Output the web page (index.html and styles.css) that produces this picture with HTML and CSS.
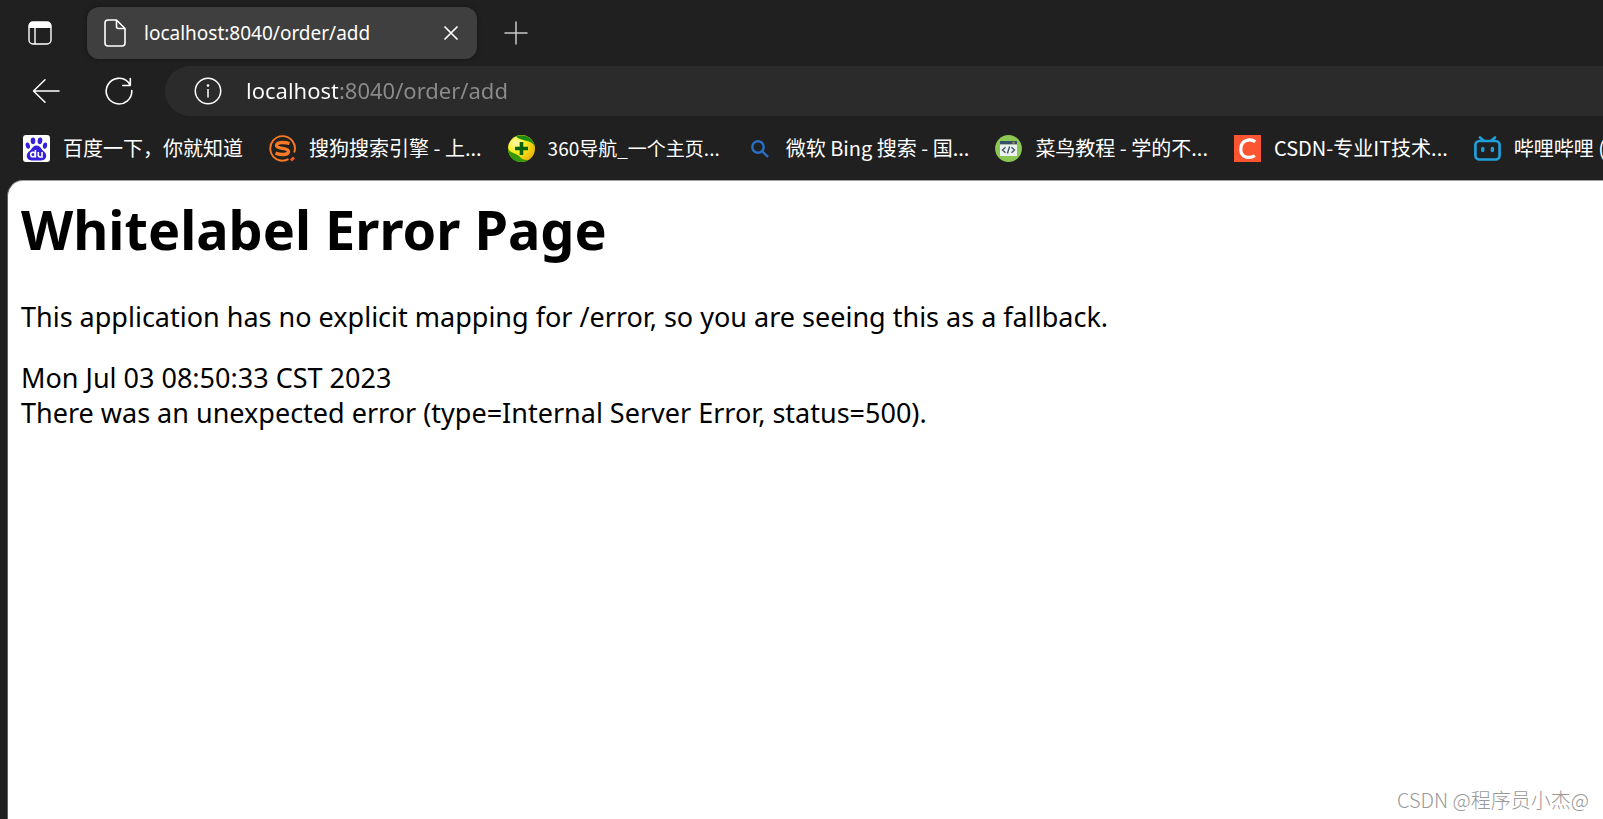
FILE: index.html
```
<!DOCTYPE html>
<html lang="zh-CN">
<head>
<meta charset="utf-8">
<meta name="viewport" content="width=device-width, initial-scale=1">
<title>localhost:8040/order/add</title>
<link rel="stylesheet" href="styles.css">
</head>
<body>
<div class="browser">
  <header class="chrome">
    <div class="tab-strip">
      <button class="icon-button tab-actions" type="button" aria-label="Tab actions">
        <svg width="24" height="24" viewBox="0 0 24 24" fill="none" stroke="#fff" stroke-width="1.4">
          <rect x="1" y="1" width="22" height="22" rx="4"/>
          <path d="M1 7V5a4 4 0 0 1 4-4h14a4 4 0 0 1 4 4v2z" fill="#fff" stroke="none"/>
          <path d="M7 7v16"/>
        </svg>
      </button>
      <div class="tab">
        <svg class="tab-icon" width="22" height="28" viewBox="0 0 22 28" fill="none" stroke="#fff" stroke-width="1.6" stroke-linejoin="round">
          <path d="M4 1h8.500L21 9.500V24a3 3 0 0 1-3 3H4a3 3 0 0 1-3-3V4a3 3 0 0 1 3-3z"/>
          <path d="M12.500 1v6.500a2 2 0 0 0 2 2H21"/>
        </svg>
        <span class="tab-title">localhost:8040/order/add</span>
        <button class="icon-button" type="button" aria-label="Close tab">
          <svg width="14" height="14" viewBox="0 0 14 14" stroke="#fff" stroke-width="1.7" stroke-linecap="round"><path d="M1 1l12 12M13 1L1 13"/></svg>
        </button>
      </div>
      <button class="icon-button" type="button" aria-label="New tab">
        <svg width="24" height="24" viewBox="0 0 24 24" stroke="#c8c8c8" stroke-width="1.5"><path d="M12 .5v23M.5 12h23"/></svg>
      </button>
    </div>

    <div class="toolbar">
      <button class="icon-button" type="button" aria-label="Back">
        <svg width="28" height="26" viewBox="0 0 28 26" fill="none" stroke="#fff" stroke-width="1.5" stroke-linecap="round" stroke-linejoin="round"><path d="M27 13H1.500M13 1.800L1.500 13 13 24.200"/></svg>
      </button>
      <button class="icon-button" type="button" aria-label="Refresh">
        <svg width="28" height="28" viewBox="0 0 28 28" fill="none" stroke="#fff" stroke-width="1.6" stroke-linecap="round" stroke-linejoin="round"><path d="M26.800 13.500A12.800 12.800 0 1 1 23.500 5.500L25.300 8.500M25.300 1.500v7h-7.500"/></svg>
      </button>
      <div class="address-bar">
        <svg width="28" height="28" viewBox="0 0 28 28" fill="none" stroke="#fff" stroke-width="1.5"><circle cx="14" cy="14" r="12.700"/><path d="M14 12v8.500"/><circle cx="14" cy="8.500" r="1.300" fill="#fff" stroke="none"/></svg>
        <input class="address" type="text" aria-label="Address" value="localhost:8040/order/add" spellcheck="false">
      </div>
    </div>

    <nav class="bookmarks" aria-label="Bookmarks">
      <a class="bookmark" href="#">
        <svg width="27" height="27" viewBox="0 0 27 27">
          <rect width="27" height="27" rx="3" fill="#fff"/>
          <g fill="#3420dc">
            <ellipse cx="10" cy="5.800" rx="2.300" ry="3.400"/><ellipse cx="17" cy="5.800" rx="2.300" ry="3.400" transform="rotate(8 17 5.800)"/>
            <ellipse cx="4.800" cy="10.600" rx="2.100" ry="3.200" transform="rotate(-12 4.800 10.600)"/><ellipse cx="22" cy="10.600" rx="2.100" ry="3.200" transform="rotate(8 22 10.600)"/>
            <path d="M13.500 10.500c2.800 0 4 2 5.500 4 1.600 2 4.200 3.400 4.200 6.300 0 3.300-2.400 4.700-5.200 4.600H9c-2.800.1-5.200-1.300-5.200-4.600 0-2.900 2.600-4.300 4.200-6.300 1.500-2 2.700-4 5.500-4z"/>
          </g>
          <g fill="none" stroke="#fff" stroke-width="1.600"><circle cx="10" cy="19.500" r="2.300"/><path d="M12.400 15v7.500M15.300 17v3.500a1.800 1.800 0 0 0 1.800 1.500h1.900v-5"/></g>
        </svg>
        <span>百度一下，你就知道</span>
      </a>
      <a class="bookmark" href="#">
        <svg width="27" height="27" viewBox="0 0 27 27" fill="none" stroke="#f87a25">
          <path d="M19.500 24.200A12.300 12.300 0 1 1 25.200 17.500" stroke-width="1.900"/>
          <path d="M20.500 8.500C14 6.500 7.500 7.500 7.500 10.500c0 4 12 1.800 12 6 0 3.500-7 3.800-13 1.600" stroke-width="3.400"/>
          <path d="M22 25.500l3-3" stroke="#f65a16" stroke-width="2.800"/>
        </svg>
        <span>搜狗搜索引擎 - 上...</span>
      </a>
      <a class="bookmark bookmark-compact" href="#">
        <svg width="27" height="27" viewBox="0 0 27 27">
          <defs><radialGradient id="ball" cx=".3" cy=".3" r=".75"><stop offset="0" stop-color="#fffcb0"/><stop offset=".45" stop-color="#f8ee20"/><stop offset="1" stop-color="#e9b70b"/></radialGradient></defs>
          <circle cx="13.500" cy="13.500" r="13.500" fill="url(#ball)"/>
          <path d="M8 1.500C15-2 25 2 26.800 11 22 4 14 7 8 1.500z" fill="#218c0c"/>
          <path d="M0 13C2 19 8 17 13 23c2 2 5 2 7 2.300C12 29.500 0 26 0 13z" fill="#35980b"/>
          <path d="M13.500 7v13M7 13.500h13" stroke="#08610c" stroke-width="3.600"/>
        </svg>
        <span>360导航_一个主页...</span>
      </a>
      <a class="bookmark" href="#">
        <svg width="27" height="27" viewBox="0 0 27 27" fill="none" stroke="#2870c5" stroke-width="2.400"><circle cx="12" cy="12" r="5.700"/><path d="M16 16l6 6"/></svg>
        <span>微软 Bing 搜索 - 国...</span>
      </a>
      <a class="bookmark" href="#">
        <svg width="27" height="27" viewBox="0 0 27 27">
          <circle cx="13.500" cy="13.500" r="13.400" fill="#8cc653"/>
          <path d="M5 6h17v3.500H5z" fill="#34516a"/><path d="M17.500 7h2v1.500h-2z" fill="#e29832"/><path d="M5 9.500h17V21H5z" fill="#ecf0f1"/>
          <path d="M10.500 12.200L7.500 15l3 2.800M16.500 12.200l3 2.800-3 2.800M14.600 11.500l-2.200 7" fill="none" stroke="#425b6c" stroke-width="1.400"/>
        </svg>
        <span>菜鸟教程 - 学的不...</span>
      </a>
      <a class="bookmark" href="#">
        <svg width="27" height="27" viewBox="0 0 27 27"><path d="M0 0h27v27H0z" fill="#fc5531"/><path d="M21.300 6.800C16.500 3 6.800 4.500 6.800 14.500c0 8.500 9 9.500 14 6" fill="none" stroke="#fff" stroke-width="3.200"/></svg>
        <span>CSDN-专业IT技术...</span>
      </a>
      <a class="bookmark" href="#">
        <svg width="27" height="27" viewBox="0 0 27 27" fill="none" stroke="#219fd9" stroke-width="2.700" stroke-linecap="round"><rect x="1.400" y="6" width="24.200" height="18.500" rx="4"/><path d="M6 2.500L9.500 5.500M21 2.500l-3.500 3"/><path d="M8.800 13.500v2M18.400 13.500v2" stroke-width="3.400"/></svg>
        <span>哔哩哔哩 (</span>
      </a>
    </nav>
  </header>

  <main class="page">
    <h1 class="page-title">Whitelabel Error Page</h1>
    <p class="page-text">This application has no explicit mapping for /error, so you are seeing this as a fallback.</p>
    <div class="page-text">Mon Jul 03 08:50:33 CST 2023</div>
    <div class="page-text">There was an unexpected error (type=Internal Server Error, status=500).</div>
    <footer class="watermark">CSDN @程序员小杰@</footer>
  </main>
</div>
</body>
</html>
```
FILE: styles.css
```
* {
  box-sizing: border-box;
}

body {
  margin: 0;
  background: #202020;
  color: #fff;
  font-family: "Noto Sans", "Noto Sans CJK SC", sans-serif;
}

.browser {
  display: flex;
  flex-direction: column;
  min-height: 100vh;
  overflow: hidden;
}

.icon-button {
  display: flex;
  flex: none;
  margin: 0;
  padding: 0;
  border: 0;
  background: none;
}

svg {
  display: block;
  flex: none;
}

.tab-strip {
  display: flex;
  align-items: center;
  gap: 27px;
  height: 66px;
  padding-left: 28px;
}

.tab-actions {
  margin-right: 8px;
}

.tab {
  display: flex;
  align-items: center;
  width: 390px;
  height: 52px;
  padding: 0 19px 0 17px;
  border-radius: 12px;
  background: #3f3f3f;
  box-shadow: 0 0 4px #141414;
}

.tab-title {
  flex: 1;
  margin-left: 18px;
  font-size: 19px;
  white-space: nowrap;
}

.toolbar {
  display: flex;
  align-items: center;
  gap: 45px;
  height: 50px;
  padding-left: 32px;
}

.address-bar {
  display: flex;
  flex: 1;
  align-items: center;
  gap: 24px;
  height: 50px;
  margin-left: -13px;
  padding-left: 29px;
  border-radius: 25px 0 0 25px;
  background: #2b2b2b;
}

.address {
  flex: 1;
  min-width: 0;
  padding: 0 0 2px;
  border: 0;
  outline: 0;
  background: linear-gradient(90deg, #fff 92px, #8c8c8c 92px);
  background-clip: text;
  -webkit-background-clip: text;
  color: transparent;
  font-family: inherit;
  font-size: 22px;
}

.bookmarks {
  display: flex;
  align-items: center;
  gap: 26px;
  height: 64px;
  padding-left: 23px;
}

.bookmark {
  display: flex;
  flex: none;
  align-items: center;
  gap: 13px;
  color: #fff;
  font-family: "Noto Sans CJK SC", sans-serif;
  font-size: 20px;
  line-height: 28px;
  text-decoration: none;
  white-space: nowrap;
}

.bookmark-compact {
  font-size: 19px;
}

.page {
  display: flex;
  flex: 1;
  flex-direction: column;
  margin-left: 7px;
  padding: 16px 14px 4px 13px;
  border-top: 1px solid #a0a0a0;
  border-left: 1px solid #606060;
  border-top-left-radius: 16px;
  background: #fff;
  color: #000;
}

.page-title {
  margin: 0 0 38px;
  font-size: 54px;
  line-height: 64px;
}

.page-text {
  margin: 0;
  font-size: 27px;
  line-height: 35px;
}

p.page-text {
  margin-bottom: 26px;
}

.watermark {
  margin-top: auto;
  align-self: flex-end;
  color: #999;
  font-family: "Noto Sans CJK SC", sans-serif;
  font-size: 20px;
  font-weight: 300;
  line-height: 30px;
}
```
